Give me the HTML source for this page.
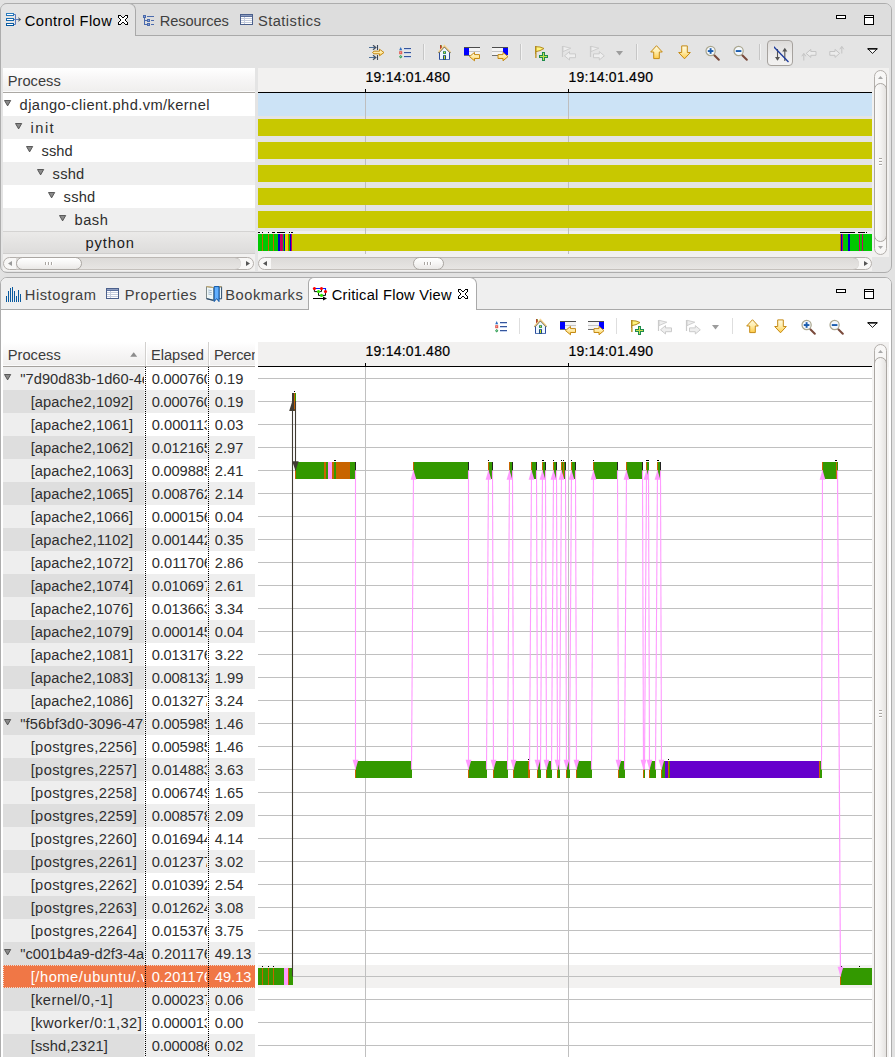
<!DOCTYPE html>
<html><head><meta charset="utf-8"><title>Trace Compass</title>
<style>
html,body{margin:0;padding:0}
body{width:895px;height:1057px;background:#e2e2e2;position:relative;overflow:hidden;font-family:"Liberation Sans",sans-serif;}
div,span,svg{position:absolute;box-sizing:border-box}
span{white-space:pre}
</style></head><body>
<div id="root" style="left:0;top:0;width:895px;height:1057px;overflow:hidden;background:#e2e2e2">
<div style="left:0;top:3px;width:892px;height:270px;border:1px solid #adadad;border-radius:7px;background:#e4e4e4"></div><div style="left:1px;top:4px;width:890px;height:32px;background:#dddddd;border-bottom:1px solid #a9a9a9;border-radius:6px 6px 0 0"></div><div style="left:1px;top:3px;width:135px;height:33px;background:#e4e4e4;border-top:1px solid #adadad;border-right:1px solid #a9a9a9;border-radius:6px 7px 0 0"></div><span style="left:24.80px;top:12.42px;font-size:14.67px;line-height:19px;color:#000;letter-spacing:0.430px;">Control Flow</span><span style="left:159.80px;top:11.92px;font-size:14.67px;line-height:19px;color:#404040;letter-spacing:-0.133px;">Resources</span><span style="left:257.90px;top:11.92px;font-size:14.67px;line-height:19px;color:#404040;letter-spacing:0.473px;">Statistics</span><div style="left:3px;top:68px;width:252px;height:24px;background:linear-gradient(#ffffff,#f7f6f6 45%,#efeeed)"></div><div style="left:3px;top:91px;width:252px;height:1px;background:#fbfbfb;"></div><div style="left:3px;top:92px;width:252px;height:1px;background:#aba8a4;"></div><span style="left:7.70px;top:71.82px;font-size:14.67px;line-height:19px;color:#3c3c3c;letter-spacing:0.024px;">Process</span><div style="left:3px;top:93px;width:252px;height:23px;background:#ffffff;"></div><svg style="left:4px;top:100px" width="8" height="7" viewBox="0 0 8 7"><path d="M0.5 0.5 L6.7 0.5 L3.6 5.9 Z" fill="#8a8a8a" stroke="#4e4e4e" stroke-width="0.9" stroke-linejoin="round"/></svg><span style="left:19.60px;top:96.42px;font-size:14.67px;line-height:19px;color:#2e2e2e;letter-spacing:0.410px;">django-client.phd.vm/kernel</span><div style="left:3px;top:116px;width:252px;height:23px;background:#efefef;"></div><svg style="left:15px;top:123px" width="8" height="7" viewBox="0 0 8 7"><path d="M0.5 0.5 L6.7 0.5 L3.6 5.9 Z" fill="#8a8a8a" stroke="#4e4e4e" stroke-width="0.9" stroke-linejoin="round"/></svg><span style="left:30.60px;top:119.42px;font-size:14.67px;line-height:19px;color:#2e2e2e;letter-spacing:1.450px;">init</span><div style="left:3px;top:139px;width:252px;height:23px;background:#ffffff;"></div><svg style="left:26px;top:146px" width="8" height="7" viewBox="0 0 8 7"><path d="M0.5 0.5 L6.7 0.5 L3.6 5.9 Z" fill="#8a8a8a" stroke="#4e4e4e" stroke-width="0.9" stroke-linejoin="round"/></svg><span style="left:41.60px;top:142.42px;font-size:14.67px;line-height:19px;color:#2e2e2e;letter-spacing:0.010px;">sshd</span><div style="left:3px;top:162px;width:252px;height:23px;background:#efefef;"></div><svg style="left:37px;top:169px" width="8" height="7" viewBox="0 0 8 7"><path d="M0.5 0.5 L6.7 0.5 L3.6 5.9 Z" fill="#8a8a8a" stroke="#4e4e4e" stroke-width="0.9" stroke-linejoin="round"/></svg><span style="left:52.60px;top:165.42px;font-size:14.67px;line-height:19px;color:#2e2e2e;letter-spacing:0.210px;">sshd</span><div style="left:3px;top:185px;width:252px;height:23px;background:#ffffff;"></div><svg style="left:48px;top:192px" width="8" height="7" viewBox="0 0 8 7"><path d="M0.5 0.5 L6.7 0.5 L3.6 5.9 Z" fill="#8a8a8a" stroke="#4e4e4e" stroke-width="0.9" stroke-linejoin="round"/></svg><span style="left:63.60px;top:188.42px;font-size:14.67px;line-height:19px;color:#2e2e2e;letter-spacing:0.210px;">sshd</span><div style="left:3px;top:208px;width:252px;height:23px;background:#efefef;"></div><svg style="left:59px;top:215px" width="8" height="7" viewBox="0 0 8 7"><path d="M0.5 0.5 L6.7 0.5 L3.6 5.9 Z" fill="#8a8a8a" stroke="#4e4e4e" stroke-width="0.9" stroke-linejoin="round"/></svg><span style="left:74.60px;top:211.42px;font-size:14.67px;line-height:19px;color:#2e2e2e;letter-spacing:0.468px;">bash</span><div style="left:3px;top:231px;width:252px;height:23px;background:linear-gradient(#ebeae9,#dddcdb);border-top:1px solid #d4d3d2;border-bottom:1px solid #cfcecd"></div><span style="left:85.60px;top:234.42px;font-size:14.67px;line-height:19px;color:#1c1c1c;letter-spacing:0.837px;">python</span><div style="left:258px;top:68px;width:631px;height:25px;background:#f2f1f0;"></div><div style="left:258px;top:92px;width:614px;height:1px;background:#000;"></div><div style="left:365px;top:89px;width:1px;height:3px;background:#000;"></div><span style="left:365.40px;top:67.55px;font-size:14px;line-height:18px;color:#000;letter-spacing:0.259px;-webkit-text-stroke:0.2px #000;">19:14:01.480</span><div style="left:568px;top:89px;width:1px;height:3px;background:#000;"></div><span style="left:568.40px;top:67.55px;font-size:14px;line-height:18px;color:#000;letter-spacing:0.259px;-webkit-text-stroke:0.2px #000;">19:14:01.490</span><div style="left:258px;top:93px;width:614px;height:23px;background:#cce3f6;"></div><div style="left:258px;top:231px;width:614px;height:23px;background:#f0f0f0;"></div><div style="left:365px;top:93px;width:1px;height:161px;background:#bebebe;"></div><div style="left:568px;top:93px;width:1px;height:161px;background:#bebebe;"></div><div style="left:258px;top:119px;width:614px;height:17px;background:#c8c800;"></div><div style="left:258px;top:142px;width:614px;height:17px;background:#c8c800;"></div><div style="left:258px;top:165px;width:614px;height:17px;background:#c8c800;"></div><div style="left:258px;top:188px;width:614px;height:17px;background:#c8c800;"></div><div style="left:258px;top:211px;width:614px;height:17px;background:#c8c800;"></div><div style="left:258px;top:234px;width:4px;height:17px;background:#00c800;"></div><div style="left:262px;top:234px;width:1px;height:17px;background:#c86400;"></div><div style="left:263px;top:234px;width:5px;height:17px;background:#00c800;"></div><div style="left:268px;top:234px;width:1px;height:17px;background:#c86400;"></div><div style="left:269px;top:234px;width:4px;height:17px;background:#00c800;"></div><div style="left:273px;top:234px;width:1px;height:17px;background:#c86400;"></div><div style="left:274px;top:234px;width:4px;height:17px;background:#00c800;"></div><div style="left:278px;top:234px;width:2px;height:17px;background:#0000c8;"></div><div style="left:280px;top:234px;width:3px;height:17px;background:#c80064;"></div><div style="left:283px;top:234px;width:1px;height:17px;background:#00c800;"></div><div style="left:284px;top:234px;width:1px;height:17px;background:#0000c8;"></div><div style="left:285px;top:234px;width:3px;height:17px;background:#dcdc00;"></div><div style="left:288px;top:234px;width:1px;height:17px;background:#c86400;"></div><div style="left:289px;top:234px;width:1px;height:17px;background:#00c800;"></div><div style="left:290px;top:234px;width:1px;height:17px;background:#0000c8;"></div><div style="left:291px;top:234px;width:1px;height:17px;background:#c80064;"></div><div style="left:292px;top:234px;width:548px;height:17px;background:#c8c800;"></div><div style="left:840px;top:234px;width:1px;height:17px;background:#c86400;"></div><div style="left:841px;top:234px;width:1px;height:17px;background:#0000c8;"></div><div style="left:842px;top:234px;width:1px;height:17px;background:#c80064;"></div><div style="left:843px;top:234px;width:5px;height:17px;background:#00c800;"></div><div style="left:848px;top:234px;width:2px;height:17px;background:#0000c8;"></div><div style="left:850px;top:234px;width:9px;height:17px;background:#00c800;"></div><div style="left:859px;top:234px;width:1px;height:17px;background:#c80064;"></div><div style="left:860px;top:234px;width:2px;height:17px;background:#00c800;"></div><div style="left:862px;top:234px;width:1px;height:17px;background:#c80064;"></div><div style="left:863px;top:234px;width:9px;height:17px;background:#00c800;"></div><div style="left:258px;top:232px;width:2px;height:1px;background:#000;"></div><div style="left:262px;top:232px;width:1px;height:1px;background:#000;"></div><div style="left:268px;top:232px;width:1px;height:1px;background:#000;"></div><div style="left:272px;top:232px;width:3px;height:1px;background:#000;"></div><div style="left:277px;top:232px;width:8px;height:1px;background:#000;"></div><div style="left:289px;top:232px;width:1px;height:1px;background:#000;"></div><div style="left:291px;top:232px;width:2px;height:1px;background:#000;"></div><div style="left:840px;top:232px;width:15px;height:1px;background:#000;"></div><div style="left:858px;top:232px;width:7px;height:1px;background:#000;"></div><div style="left:866px;top:232px;width:1px;height:1px;background:#000;"></div><div style="left:0;top:277px;width:892px;height:800px;border:1px solid #adadad;border-radius:7px;background:#ffffff"></div><div style="left:1px;top:278px;width:890px;height:32px;background:#efefef;border-bottom:1px solid #a9a9a9;border-radius:6px 6px 0 0"></div><div style="left:308px;top:277px;width:169px;height:33px;background:#ffffff;border:1px solid #a9a9a9;border-bottom:none;border-top-color:#adadad;border-radius:6px 7px 0 0"></div><span style="left:24.80px;top:286.02px;font-size:14.67px;line-height:19px;color:#404040;letter-spacing:0.550px;">Histogram</span><span style="left:124.80px;top:286.02px;font-size:14.67px;line-height:19px;color:#404040;letter-spacing:0.543px;">Properties</span><span style="left:225.30px;top:286.02px;font-size:14.67px;line-height:19px;color:#404040;letter-spacing:0.523px;">Bookmarks</span><span style="left:331.70px;top:286.02px;font-size:14.67px;line-height:19px;color:#000;letter-spacing:0.266px;">Critical Flow View</span><div style="left:3px;top:342px;width:252px;height:24px;background:linear-gradient(#ffffff,#f7f6f6 45%,#efeeed)"></div><div style="left:3px;top:365px;width:252px;height:1px;background:#fbfbfb;"></div><div style="left:3px;top:366px;width:252px;height:1px;background:#a5a29e;"></div><div style="left:145px;top:342px;width:1px;height:24px;background:#d2d0ce;"></div><div style="left:146px;top:342px;width:1px;height:24px;background:#ffffff;"></div><div style="left:208px;top:342px;width:1px;height:24px;background:#d2d0ce;"></div><div style="left:209px;top:342px;width:1px;height:24px;background:#ffffff;"></div><span style="left:7.70px;top:345.82px;font-size:14.67px;line-height:19px;color:#3c3c3c;letter-spacing:0.024px;">Process</span><span style="left:150.90px;top:345.82px;font-size:14.67px;line-height:19px;color:#3c3c3c;letter-spacing:-0.011px;">Elapsed</span><span style="left:214.00px;top:345.82px;font-size:14.67px;line-height:19px;color:#3c3c3c;letter-spacing:-0.203px;width:41px;overflow:hidden;">Percent</span><svg style="left:130px;top:352px" width="8" height="5" viewBox="0 0 8 5"><path d="M0.2 4.8 L3.7 0.2 L7.2 4.8 Z" fill="#8c8c8c"/></svg><div style="left:3px;top:367px;width:141px;height:23px;background:#eeeeee;"></div><svg style="left:4px;top:374px" width="8" height="7" viewBox="0 0 8 7"><path d="M0.5 0.5 L6.7 0.5 L3.6 5.9 Z" fill="#8a8a8a" stroke="#4e4e4e" stroke-width="0.9" stroke-linejoin="round"/></svg><div style="left:3px;top:367px;width:141px;height:23px;overflow:hidden"><span style="left:17.30px;top:3.42px;font-size:14.67px;line-height:19px;color:#2e2e2e;letter-spacing:0.037px;">&quot;7d90d83b-1d60-4e2</span></div><div style="left:146px;top:367px;width:61px;height:23px;overflow:hidden"><span style="left:5.70px;top:3.42px;font-size:14.67px;line-height:19px;color:#2e2e2e;letter-spacing:-0.147px;">0.000760</span></div><span style="left:214.80px;top:370.42px;font-size:14.67px;line-height:19px;color:#2e2e2e;">0.19</span><div style="left:3px;top:390px;width:141px;height:23px;background:#dedede;"></div><div style="left:144px;top:390px;width:111px;height:23px;background:#eeeeee;"></div><div style="left:3px;top:390px;width:141px;height:23px;overflow:hidden"><span style="left:27.70px;top:3.42px;font-size:14.67px;line-height:19px;color:#2e2e2e;letter-spacing:0.095px;">[apache2,1092]</span></div><div style="left:146px;top:390px;width:61px;height:23px;overflow:hidden"><span style="left:5.70px;top:3.42px;font-size:14.67px;line-height:19px;color:#2e2e2e;letter-spacing:-0.147px;">0.000760</span></div><span style="left:214.80px;top:393.42px;font-size:14.67px;line-height:19px;color:#2e2e2e;">0.19</span><div style="left:3px;top:413px;width:141px;height:23px;background:#eeeeee;"></div><div style="left:3px;top:413px;width:141px;height:23px;overflow:hidden"><span style="left:27.70px;top:3.42px;font-size:14.67px;line-height:19px;color:#2e2e2e;letter-spacing:0.095px;">[apache2,1061]</span></div><div style="left:146px;top:413px;width:61px;height:23px;overflow:hidden"><span style="left:5.70px;top:3.42px;font-size:14.67px;line-height:19px;color:#2e2e2e;letter-spacing:0.035px;">0.000113</span></div><span style="left:214.80px;top:416.42px;font-size:14.67px;line-height:19px;color:#2e2e2e;">0.03</span><div style="left:3px;top:436px;width:141px;height:23px;background:#dedede;"></div><div style="left:144px;top:436px;width:111px;height:23px;background:#eeeeee;"></div><div style="left:3px;top:436px;width:141px;height:23px;overflow:hidden"><span style="left:27.70px;top:3.42px;font-size:14.67px;line-height:19px;color:#2e2e2e;letter-spacing:0.095px;">[apache2,1062]</span></div><div style="left:146px;top:436px;width:61px;height:23px;overflow:hidden"><span style="left:5.70px;top:3.42px;font-size:14.67px;line-height:19px;color:#2e2e2e;letter-spacing:-0.147px;">0.012165</span></div><span style="left:214.80px;top:439.42px;font-size:14.67px;line-height:19px;color:#2e2e2e;">2.97</span><div style="left:3px;top:459px;width:141px;height:23px;background:#eeeeee;"></div><div style="left:3px;top:459px;width:141px;height:23px;overflow:hidden"><span style="left:27.70px;top:3.42px;font-size:14.67px;line-height:19px;color:#2e2e2e;letter-spacing:0.095px;">[apache2,1063]</span></div><div style="left:146px;top:459px;width:61px;height:23px;overflow:hidden"><span style="left:5.70px;top:3.42px;font-size:14.67px;line-height:19px;color:#2e2e2e;letter-spacing:-0.147px;">0.009885</span></div><span style="left:214.80px;top:462.42px;font-size:14.67px;line-height:19px;color:#2e2e2e;">2.41</span><div style="left:3px;top:482px;width:141px;height:23px;background:#dedede;"></div><div style="left:144px;top:482px;width:111px;height:23px;background:#eeeeee;"></div><div style="left:3px;top:482px;width:141px;height:23px;overflow:hidden"><span style="left:27.70px;top:3.42px;font-size:14.67px;line-height:19px;color:#2e2e2e;letter-spacing:0.095px;">[apache2,1065]</span></div><div style="left:146px;top:482px;width:61px;height:23px;overflow:hidden"><span style="left:5.70px;top:3.42px;font-size:14.67px;line-height:19px;color:#2e2e2e;letter-spacing:-0.147px;">0.008762</span></div><span style="left:214.80px;top:485.42px;font-size:14.67px;line-height:19px;color:#2e2e2e;">2.14</span><div style="left:3px;top:505px;width:141px;height:23px;background:#eeeeee;"></div><div style="left:3px;top:505px;width:141px;height:23px;overflow:hidden"><span style="left:27.70px;top:3.42px;font-size:14.67px;line-height:19px;color:#2e2e2e;letter-spacing:0.095px;">[apache2,1066]</span></div><div style="left:146px;top:505px;width:61px;height:23px;overflow:hidden"><span style="left:5.70px;top:3.42px;font-size:14.67px;line-height:19px;color:#2e2e2e;letter-spacing:-0.147px;">0.000156</span></div><span style="left:214.80px;top:508.42px;font-size:14.67px;line-height:19px;color:#2e2e2e;">0.04</span><div style="left:3px;top:528px;width:141px;height:23px;background:#dedede;"></div><div style="left:144px;top:528px;width:111px;height:23px;background:#eeeeee;"></div><div style="left:3px;top:528px;width:141px;height:23px;overflow:hidden"><span style="left:27.70px;top:3.42px;font-size:14.67px;line-height:19px;color:#2e2e2e;letter-spacing:0.179px;">[apache2,1102]</span></div><div style="left:146px;top:528px;width:61px;height:23px;overflow:hidden"><span style="left:5.70px;top:3.42px;font-size:14.67px;line-height:19px;color:#2e2e2e;letter-spacing:-0.147px;">0.001442</span></div><span style="left:214.80px;top:531.42px;font-size:14.67px;line-height:19px;color:#2e2e2e;">0.35</span><div style="left:3px;top:551px;width:141px;height:23px;background:#eeeeee;"></div><div style="left:3px;top:551px;width:141px;height:23px;overflow:hidden"><span style="left:27.70px;top:3.42px;font-size:14.67px;line-height:19px;color:#2e2e2e;letter-spacing:0.095px;">[apache2,1072]</span></div><div style="left:146px;top:551px;width:61px;height:23px;overflow:hidden"><span style="left:5.70px;top:3.42px;font-size:14.67px;line-height:19px;color:#2e2e2e;letter-spacing:0.035px;">0.011706</span></div><span style="left:214.80px;top:554.42px;font-size:14.67px;line-height:19px;color:#2e2e2e;">2.86</span><div style="left:3px;top:574px;width:141px;height:23px;background:#dedede;"></div><div style="left:144px;top:574px;width:111px;height:23px;background:#eeeeee;"></div><div style="left:3px;top:574px;width:141px;height:23px;overflow:hidden"><span style="left:27.70px;top:3.42px;font-size:14.67px;line-height:19px;color:#2e2e2e;letter-spacing:0.095px;">[apache2,1074]</span></div><div style="left:146px;top:574px;width:61px;height:23px;overflow:hidden"><span style="left:5.70px;top:3.42px;font-size:14.67px;line-height:19px;color:#2e2e2e;letter-spacing:-0.147px;">0.010697</span></div><span style="left:214.80px;top:577.42px;font-size:14.67px;line-height:19px;color:#2e2e2e;">2.61</span><div style="left:3px;top:597px;width:141px;height:23px;background:#eeeeee;"></div><div style="left:3px;top:597px;width:141px;height:23px;overflow:hidden"><span style="left:27.70px;top:3.42px;font-size:14.67px;line-height:19px;color:#2e2e2e;letter-spacing:0.095px;">[apache2,1076]</span></div><div style="left:146px;top:597px;width:61px;height:23px;overflow:hidden"><span style="left:5.70px;top:3.42px;font-size:14.67px;line-height:19px;color:#2e2e2e;letter-spacing:-0.147px;">0.013663</span></div><span style="left:214.80px;top:600.42px;font-size:14.67px;line-height:19px;color:#2e2e2e;">3.34</span><div style="left:3px;top:620px;width:141px;height:23px;background:#dedede;"></div><div style="left:144px;top:620px;width:111px;height:23px;background:#eeeeee;"></div><div style="left:3px;top:620px;width:141px;height:23px;overflow:hidden"><span style="left:27.70px;top:3.42px;font-size:14.67px;line-height:19px;color:#2e2e2e;letter-spacing:0.095px;">[apache2,1079]</span></div><div style="left:146px;top:620px;width:61px;height:23px;overflow:hidden"><span style="left:5.70px;top:3.42px;font-size:14.67px;line-height:19px;color:#2e2e2e;letter-spacing:-0.147px;">0.000145</span></div><span style="left:214.80px;top:623.42px;font-size:14.67px;line-height:19px;color:#2e2e2e;">0.04</span><div style="left:3px;top:643px;width:141px;height:23px;background:#eeeeee;"></div><div style="left:3px;top:643px;width:141px;height:23px;overflow:hidden"><span style="left:27.70px;top:3.42px;font-size:14.67px;line-height:19px;color:#2e2e2e;letter-spacing:0.095px;">[apache2,1081]</span></div><div style="left:146px;top:643px;width:61px;height:23px;overflow:hidden"><span style="left:5.70px;top:3.42px;font-size:14.67px;line-height:19px;color:#2e2e2e;letter-spacing:-0.147px;">0.013176</span></div><span style="left:214.80px;top:646.42px;font-size:14.67px;line-height:19px;color:#2e2e2e;">3.22</span><div style="left:3px;top:666px;width:141px;height:23px;background:#dedede;"></div><div style="left:144px;top:666px;width:111px;height:23px;background:#eeeeee;"></div><div style="left:3px;top:666px;width:141px;height:23px;overflow:hidden"><span style="left:27.70px;top:3.42px;font-size:14.67px;line-height:19px;color:#2e2e2e;letter-spacing:0.095px;">[apache2,1083]</span></div><div style="left:146px;top:666px;width:61px;height:23px;overflow:hidden"><span style="left:5.70px;top:3.42px;font-size:14.67px;line-height:19px;color:#2e2e2e;letter-spacing:-0.147px;">0.008132</span></div><span style="left:214.80px;top:669.42px;font-size:14.67px;line-height:19px;color:#2e2e2e;">1.99</span><div style="left:3px;top:689px;width:141px;height:23px;background:#eeeeee;"></div><div style="left:3px;top:689px;width:141px;height:23px;overflow:hidden"><span style="left:27.70px;top:3.42px;font-size:14.67px;line-height:19px;color:#2e2e2e;letter-spacing:0.095px;">[apache2,1086]</span></div><div style="left:146px;top:689px;width:61px;height:23px;overflow:hidden"><span style="left:5.70px;top:3.42px;font-size:14.67px;line-height:19px;color:#2e2e2e;letter-spacing:-0.147px;">0.013277</span></div><span style="left:214.80px;top:692.42px;font-size:14.67px;line-height:19px;color:#2e2e2e;">3.24</span><div style="left:3px;top:712px;width:141px;height:23px;background:#dedede;"></div><div style="left:144px;top:712px;width:111px;height:23px;background:#eeeeee;"></div><svg style="left:4px;top:719px" width="8" height="7" viewBox="0 0 8 7"><path d="M0.5 0.5 L6.7 0.5 L3.6 5.9 Z" fill="#8a8a8a" stroke="#4e4e4e" stroke-width="0.9" stroke-linejoin="round"/></svg><div style="left:3px;top:712px;width:141px;height:23px;overflow:hidden"><span style="left:17.30px;top:3.42px;font-size:14.67px;line-height:19px;color:#2e2e2e;letter-spacing:0.124px;">&quot;f56bf3d0-3096-479</span></div><div style="left:146px;top:712px;width:61px;height:23px;overflow:hidden"><span style="left:5.70px;top:3.42px;font-size:14.67px;line-height:19px;color:#2e2e2e;letter-spacing:-0.147px;">0.005985</span></div><span style="left:214.80px;top:715.42px;font-size:14.67px;line-height:19px;color:#2e2e2e;">1.46</span><div style="left:3px;top:735px;width:141px;height:23px;background:#eeeeee;"></div><div style="left:3px;top:735px;width:141px;height:23px;overflow:hidden"><span style="left:27.70px;top:3.42px;font-size:14.67px;line-height:19px;color:#2e2e2e;letter-spacing:0.361px;">[postgres,2256]</span></div><div style="left:146px;top:735px;width:61px;height:23px;overflow:hidden"><span style="left:5.70px;top:3.42px;font-size:14.67px;line-height:19px;color:#2e2e2e;letter-spacing:-0.147px;">0.005985</span></div><span style="left:214.80px;top:738.42px;font-size:14.67px;line-height:19px;color:#2e2e2e;">1.46</span><div style="left:3px;top:758px;width:141px;height:23px;background:#dedede;"></div><div style="left:144px;top:758px;width:111px;height:23px;background:#eeeeee;"></div><div style="left:3px;top:758px;width:141px;height:23px;overflow:hidden"><span style="left:27.70px;top:3.42px;font-size:14.67px;line-height:19px;color:#2e2e2e;letter-spacing:0.361px;">[postgres,2257]</span></div><div style="left:146px;top:758px;width:61px;height:23px;overflow:hidden"><span style="left:5.70px;top:3.42px;font-size:14.67px;line-height:19px;color:#2e2e2e;letter-spacing:-0.147px;">0.014883</span></div><span style="left:214.80px;top:761.42px;font-size:14.67px;line-height:19px;color:#2e2e2e;">3.63</span><div style="left:3px;top:781px;width:141px;height:23px;background:#eeeeee;"></div><div style="left:3px;top:781px;width:141px;height:23px;overflow:hidden"><span style="left:27.70px;top:3.42px;font-size:14.67px;line-height:19px;color:#2e2e2e;letter-spacing:0.361px;">[postgres,2258]</span></div><div style="left:146px;top:781px;width:61px;height:23px;overflow:hidden"><span style="left:5.70px;top:3.42px;font-size:14.67px;line-height:19px;color:#2e2e2e;letter-spacing:-0.147px;">0.006749</span></div><span style="left:214.80px;top:784.42px;font-size:14.67px;line-height:19px;color:#2e2e2e;">1.65</span><div style="left:3px;top:804px;width:141px;height:23px;background:#dedede;"></div><div style="left:144px;top:804px;width:111px;height:23px;background:#eeeeee;"></div><div style="left:3px;top:804px;width:141px;height:23px;overflow:hidden"><span style="left:27.70px;top:3.42px;font-size:14.67px;line-height:19px;color:#2e2e2e;letter-spacing:0.361px;">[postgres,2259]</span></div><div style="left:146px;top:804px;width:61px;height:23px;overflow:hidden"><span style="left:5.70px;top:3.42px;font-size:14.67px;line-height:19px;color:#2e2e2e;letter-spacing:-0.147px;">0.008578</span></div><span style="left:214.80px;top:807.42px;font-size:14.67px;line-height:19px;color:#2e2e2e;">2.09</span><div style="left:3px;top:827px;width:141px;height:23px;background:#eeeeee;"></div><div style="left:3px;top:827px;width:141px;height:23px;overflow:hidden"><span style="left:27.70px;top:3.42px;font-size:14.67px;line-height:19px;color:#2e2e2e;letter-spacing:0.361px;">[postgres,2260]</span></div><div style="left:146px;top:827px;width:61px;height:23px;overflow:hidden"><span style="left:5.70px;top:3.42px;font-size:14.67px;line-height:19px;color:#2e2e2e;letter-spacing:-0.147px;">0.016944</span></div><span style="left:214.80px;top:830.42px;font-size:14.67px;line-height:19px;color:#2e2e2e;">4.14</span><div style="left:3px;top:850px;width:141px;height:23px;background:#dedede;"></div><div style="left:144px;top:850px;width:111px;height:23px;background:#eeeeee;"></div><div style="left:3px;top:850px;width:141px;height:23px;overflow:hidden"><span style="left:27.70px;top:3.42px;font-size:14.67px;line-height:19px;color:#2e2e2e;letter-spacing:0.361px;">[postgres,2261]</span></div><div style="left:146px;top:850px;width:61px;height:23px;overflow:hidden"><span style="left:5.70px;top:3.42px;font-size:14.67px;line-height:19px;color:#2e2e2e;letter-spacing:-0.147px;">0.012377</span></div><span style="left:214.80px;top:853.42px;font-size:14.67px;line-height:19px;color:#2e2e2e;">3.02</span><div style="left:3px;top:873px;width:141px;height:23px;background:#eeeeee;"></div><div style="left:3px;top:873px;width:141px;height:23px;overflow:hidden"><span style="left:27.70px;top:3.42px;font-size:14.67px;line-height:19px;color:#2e2e2e;letter-spacing:0.361px;">[postgres,2262]</span></div><div style="left:146px;top:873px;width:61px;height:23px;overflow:hidden"><span style="left:5.70px;top:3.42px;font-size:14.67px;line-height:19px;color:#2e2e2e;letter-spacing:-0.147px;">0.010392</span></div><span style="left:214.80px;top:876.42px;font-size:14.67px;line-height:19px;color:#2e2e2e;">2.54</span><div style="left:3px;top:896px;width:141px;height:23px;background:#dedede;"></div><div style="left:144px;top:896px;width:111px;height:23px;background:#eeeeee;"></div><div style="left:3px;top:896px;width:141px;height:23px;overflow:hidden"><span style="left:27.70px;top:3.42px;font-size:14.67px;line-height:19px;color:#2e2e2e;letter-spacing:0.361px;">[postgres,2263]</span></div><div style="left:146px;top:896px;width:61px;height:23px;overflow:hidden"><span style="left:5.70px;top:3.42px;font-size:14.67px;line-height:19px;color:#2e2e2e;letter-spacing:-0.147px;">0.012624</span></div><span style="left:214.80px;top:899.42px;font-size:14.67px;line-height:19px;color:#2e2e2e;">3.08</span><div style="left:3px;top:919px;width:141px;height:23px;background:#eeeeee;"></div><div style="left:3px;top:919px;width:141px;height:23px;overflow:hidden"><span style="left:27.70px;top:3.42px;font-size:14.67px;line-height:19px;color:#2e2e2e;letter-spacing:0.361px;">[postgres,2264]</span></div><div style="left:146px;top:919px;width:61px;height:23px;overflow:hidden"><span style="left:5.70px;top:3.42px;font-size:14.67px;line-height:19px;color:#2e2e2e;letter-spacing:-0.147px;">0.015376</span></div><span style="left:214.80px;top:922.42px;font-size:14.67px;line-height:19px;color:#2e2e2e;">3.75</span><div style="left:3px;top:942px;width:141px;height:23px;background:#dedede;"></div><div style="left:144px;top:942px;width:111px;height:23px;background:#eeeeee;"></div><svg style="left:4px;top:949px" width="8" height="7" viewBox="0 0 8 7"><path d="M0.5 0.5 L6.7 0.5 L3.6 5.9 Z" fill="#8a8a8a" stroke="#4e4e4e" stroke-width="0.9" stroke-linejoin="round"/></svg><div style="left:3px;top:942px;width:141px;height:23px;overflow:hidden"><span style="left:17.30px;top:3.42px;font-size:14.67px;line-height:19px;color:#2e2e2e;letter-spacing:-0.024px;">&quot;c001b4a9-d2f3-4a5</span></div><div style="left:146px;top:942px;width:61px;height:23px;overflow:hidden"><span style="left:5.70px;top:3.42px;font-size:14.67px;line-height:19px;color:#2e2e2e;letter-spacing:0.035px;">0.201176</span></div><span style="left:214.80px;top:945.42px;font-size:14.67px;line-height:19px;color:#2e2e2e;">49.13</span><div style="left:3px;top:965px;width:252px;height:23px;background:#f07746;"></div><div style="left:3px;top:965px;width:252px;height:1px;background:repeating-linear-gradient(90deg,#ecd9d0 0,#ecd9d0 1px,transparent 1px,transparent 2px)"></div><div style="left:3px;top:987px;width:252px;height:1px;background:repeating-linear-gradient(90deg,#ecd9d0 0,#ecd9d0 1px,transparent 1px,transparent 2px)"></div><div style="left:3px;top:965px;width:1px;height:23px;background:repeating-linear-gradient(#ecd9d0 0,#ecd9d0 1px,transparent 1px,transparent 2px)"></div><div style="left:3px;top:965px;width:141px;height:23px;overflow:hidden"><span style="left:27.70px;top:3.42px;font-size:14.67px;line-height:19px;color:#ffffff;letter-spacing:0.553px;">[/home/ubuntu/.v</span></div><div style="left:146px;top:965px;width:61px;height:23px;overflow:hidden"><span style="left:5.70px;top:3.42px;font-size:14.67px;line-height:19px;color:#ffffff;letter-spacing:0.035px;">0.201176</span></div><span style="left:214.80px;top:968.42px;font-size:14.67px;line-height:19px;color:#ffffff;">49.13</span><div style="left:3px;top:988px;width:141px;height:23px;background:#dedede;"></div><div style="left:144px;top:988px;width:111px;height:23px;background:#eeeeee;"></div><div style="left:3px;top:988px;width:141px;height:23px;overflow:hidden"><span style="left:27.70px;top:3.42px;font-size:14.67px;line-height:19px;color:#2e2e2e;letter-spacing:0.384px;">[kernel/0,-1]</span></div><div style="left:146px;top:988px;width:61px;height:23px;overflow:hidden"><span style="left:5.70px;top:3.42px;font-size:14.67px;line-height:19px;color:#2e2e2e;letter-spacing:-0.147px;">0.000237</span></div><span style="left:214.80px;top:991.42px;font-size:14.67px;line-height:19px;color:#2e2e2e;">0.06</span><div style="left:3px;top:1011px;width:141px;height:23px;background:#eeeeee;"></div><div style="left:3px;top:1011px;width:141px;height:23px;overflow:hidden"><span style="left:27.70px;top:3.42px;font-size:14.67px;line-height:19px;color:#2e2e2e;letter-spacing:0.455px;">[kworker/0:1,32]</span></div><div style="left:146px;top:1011px;width:61px;height:23px;overflow:hidden"><span style="left:5.70px;top:3.42px;font-size:14.67px;line-height:19px;color:#2e2e2e;letter-spacing:-0.147px;">0.000013</span></div><span style="left:214.80px;top:1014.42px;font-size:14.67px;line-height:19px;color:#2e2e2e;">0.00</span><div style="left:3px;top:1034px;width:141px;height:23px;background:#dedede;"></div><div style="left:144px;top:1034px;width:111px;height:23px;background:#eeeeee;"></div><div style="left:3px;top:1034px;width:141px;height:23px;overflow:hidden"><span style="left:27.70px;top:3.42px;font-size:14.67px;line-height:19px;color:#2e2e2e;letter-spacing:0.132px;">[sshd,2321]</span></div><div style="left:146px;top:1034px;width:61px;height:23px;overflow:hidden"><span style="left:5.70px;top:3.42px;font-size:14.67px;line-height:19px;color:#2e2e2e;letter-spacing:-0.147px;">0.000086</span></div><span style="left:214.80px;top:1037.42px;font-size:14.67px;line-height:19px;color:#2e2e2e;">0.02</span><div style="left:145px;top:367px;width:1px;height:700px;background:repeating-linear-gradient(#000 0,#000 1px,transparent 1px,transparent 2px)"></div><div style="left:208px;top:367px;width:1px;height:700px;background:repeating-linear-gradient(#000 0,#000 1px,transparent 1px,transparent 2px)"></div><div style="left:258px;top:342px;width:631px;height:25px;background:#f2f1f0;"></div><div style="left:258px;top:366px;width:614px;height:1px;background:#000;"></div><div style="left:365px;top:363px;width:1px;height:3px;background:#000;"></div><span style="left:365.40px;top:341.55px;font-size:14px;line-height:18px;color:#000;letter-spacing:0.259px;-webkit-text-stroke:0.2px #000;">19:14:01.480</span><div style="left:568px;top:363px;width:1px;height:3px;background:#000;"></div><span style="left:568.40px;top:341.55px;font-size:14px;line-height:18px;color:#000;letter-spacing:0.259px;-webkit-text-stroke:0.2px #000;">19:14:01.490</span><div style="left:258px;top:965px;width:614px;height:23px;background:#f2f1f0;"></div><div style="left:258px;top:378px;width:614px;height:1px;background:#c0c0c0;"></div><div style="left:258px;top:401px;width:614px;height:1px;background:#c0c0c0;"></div><div style="left:258px;top:424px;width:614px;height:1px;background:#c0c0c0;"></div><div style="left:258px;top:447px;width:614px;height:1px;background:#c0c0c0;"></div><div style="left:258px;top:470px;width:614px;height:1px;background:#c0c0c0;"></div><div style="left:258px;top:493px;width:614px;height:1px;background:#c0c0c0;"></div><div style="left:258px;top:516px;width:614px;height:1px;background:#c0c0c0;"></div><div style="left:258px;top:539px;width:614px;height:1px;background:#c0c0c0;"></div><div style="left:258px;top:562px;width:614px;height:1px;background:#c0c0c0;"></div><div style="left:258px;top:585px;width:614px;height:1px;background:#c0c0c0;"></div><div style="left:258px;top:608px;width:614px;height:1px;background:#c0c0c0;"></div><div style="left:258px;top:631px;width:614px;height:1px;background:#c0c0c0;"></div><div style="left:258px;top:654px;width:614px;height:1px;background:#c0c0c0;"></div><div style="left:258px;top:677px;width:614px;height:1px;background:#c0c0c0;"></div><div style="left:258px;top:700px;width:614px;height:1px;background:#c0c0c0;"></div><div style="left:258px;top:723px;width:614px;height:1px;background:#c0c0c0;"></div><div style="left:258px;top:746px;width:614px;height:1px;background:#c0c0c0;"></div><div style="left:258px;top:769px;width:614px;height:1px;background:#c0c0c0;"></div><div style="left:258px;top:792px;width:614px;height:1px;background:#c0c0c0;"></div><div style="left:258px;top:815px;width:614px;height:1px;background:#c0c0c0;"></div><div style="left:258px;top:838px;width:614px;height:1px;background:#c0c0c0;"></div><div style="left:258px;top:861px;width:614px;height:1px;background:#c0c0c0;"></div><div style="left:258px;top:884px;width:614px;height:1px;background:#c0c0c0;"></div><div style="left:258px;top:907px;width:614px;height:1px;background:#c0c0c0;"></div><div style="left:258px;top:930px;width:614px;height:1px;background:#c0c0c0;"></div><div style="left:258px;top:953px;width:614px;height:1px;background:#c0c0c0;"></div><div style="left:258px;top:976px;width:614px;height:1px;background:#c0c0c0;"></div><div style="left:258px;top:999px;width:614px;height:1px;background:#c0c0c0;"></div><div style="left:258px;top:1022px;width:614px;height:1px;background:#c0c0c0;"></div><div style="left:258px;top:1045px;width:614px;height:1px;background:#c0c0c0;"></div><div style="left:365px;top:367px;width:1px;height:700px;background:#c0c0c0;"></div><div style="left:568px;top:367px;width:1px;height:700px;background:#c0c0c0;"></div><div style="left:292px;top:393px;width:2px;height:18px;background:#403b33;"></div><div style="left:294px;top:393px;width:1px;height:16px;background:#c86400;"></div><div style="left:294px;top:409px;width:1px;height:2px;background:#6b4a20;"></div><div style="left:295px;top:393px;width:1px;height:8px;background:#339900;"></div><div style="left:294px;top:391px;width:1px;height:1px;background:#000;"></div><div style="left:295px;top:462px;width:29px;height:17px;background:#339900;"></div><div style="left:324px;top:462px;width:2px;height:17px;background:#c86400;"></div><div style="left:326px;top:462px;width:2px;height:17px;background:#339900;"></div><div style="left:328px;top:462px;width:4px;height:17px;background:#ff9bff;"></div><div style="left:332px;top:462px;width:2px;height:17px;background:#c86400;"></div><div style="left:334px;top:462px;width:2px;height:17px;background:#339900;"></div><div style="left:336px;top:462px;width:14px;height:17px;background:#c86400;"></div><div style="left:350px;top:462px;width:6px;height:17px;background:#339900;"></div><div style="left:295px;top:462px;width:1px;height:17px;background:#c86400;"></div><div style="left:413px;top:462px;width:1px;height:17px;background:#c86400;"></div><div style="left:414px;top:462px;width:55px;height:17px;background:#339900;"></div><div style="left:488px;top:462px;width:1px;height:17px;background:#c86400;"></div><div style="left:489px;top:462px;width:4px;height:17px;background:#339900;"></div><div style="left:509px;top:462px;width:1px;height:17px;background:#c86400;"></div><div style="left:510px;top:462px;width:3px;height:17px;background:#339900;"></div><div style="left:531px;top:462px;width:1px;height:17px;background:#c86400;"></div><div style="left:532px;top:462px;width:5px;height:17px;background:#339900;"></div><div style="left:542px;top:462px;width:1px;height:17px;background:#c86400;"></div><div style="left:543px;top:462px;width:3px;height:17px;background:#339900;"></div><div style="left:553px;top:462px;width:1px;height:17px;background:#c86400;"></div><div style="left:554px;top:462px;width:3px;height:17px;background:#339900;"></div><div style="left:561px;top:462px;width:1px;height:17px;background:#c86400;"></div><div style="left:562px;top:462px;width:4px;height:17px;background:#339900;"></div><div style="left:571px;top:462px;width:1px;height:17px;background:#c86400;"></div><div style="left:572px;top:462px;width:4px;height:17px;background:#339900;"></div><div style="left:593px;top:462px;width:1px;height:17px;background:#c86400;"></div><div style="left:594px;top:462px;width:24px;height:17px;background:#339900;"></div><div style="left:626px;top:462px;width:1px;height:17px;background:#c86400;"></div><div style="left:627px;top:462px;width:16px;height:17px;background:#339900;"></div><div style="left:646px;top:462px;width:1px;height:17px;background:#c86400;"></div><div style="left:647px;top:462px;width:2px;height:17px;background:#339900;"></div><div style="left:657px;top:462px;width:1px;height:17px;background:#c86400;"></div><div style="left:658px;top:462px;width:3px;height:17px;background:#339900;"></div><div style="left:822px;top:462px;width:1px;height:17px;background:#c86400;"></div><div style="left:823px;top:462px;width:15px;height:17px;background:#339900;"></div><div style="left:563px;top:462px;width:1px;height:17px;background:#c86400;"></div><div style="left:836px;top:462px;width:1px;height:17px;background:#c86400;"></div><div style="left:355px;top:462px;width:1px;height:8px;background:#222;"></div><div style="left:468px;top:462px;width:1px;height:8px;background:#222;"></div><div style="left:492px;top:462px;width:1px;height:8px;background:#222;"></div><div style="left:512px;top:462px;width:1px;height:8px;background:#222;"></div><div style="left:536px;top:462px;width:1px;height:8px;background:#222;"></div><div style="left:545px;top:462px;width:1px;height:8px;background:#222;"></div><div style="left:556px;top:462px;width:1px;height:8px;background:#222;"></div><div style="left:565px;top:462px;width:1px;height:8px;background:#222;"></div><div style="left:575px;top:462px;width:1px;height:8px;background:#222;"></div><div style="left:617px;top:462px;width:1px;height:8px;background:#222;"></div><div style="left:642px;top:462px;width:1px;height:8px;background:#222;"></div><div style="left:660px;top:462px;width:1px;height:8px;background:#222;"></div><div style="left:334px;top:460px;width:2px;height:1px;background:#000;"></div><div style="left:488px;top:460px;width:1px;height:1px;background:#000;"></div><div style="left:542px;top:460px;width:2px;height:1px;background:#000;"></div><div style="left:553px;top:460px;width:1px;height:1px;background:#000;"></div><div style="left:561px;top:460px;width:1px;height:1px;background:#000;"></div><div style="left:563px;top:460px;width:1px;height:1px;background:#000;"></div><div style="left:571px;top:460px;width:1px;height:1px;background:#000;"></div><div style="left:593px;top:460px;width:1px;height:1px;background:#000;"></div><div style="left:646px;top:460px;width:3px;height:1px;background:#000;"></div><div style="left:657px;top:460px;width:2px;height:1px;background:#000;"></div><div style="left:835px;top:460px;width:2px;height:1px;background:#000;"></div><div style="left:355px;top:761px;width:1px;height:17px;background:#c86400;"></div><div style="left:356px;top:761px;width:56px;height:17px;background:#339900;"></div><div style="left:468px;top:761px;width:1px;height:17px;background:#c86400;"></div><div style="left:469px;top:761px;width:18px;height:17px;background:#339900;"></div><div style="left:493px;top:761px;width:1px;height:17px;background:#c86400;"></div><div style="left:494px;top:761px;width:14px;height:17px;background:#339900;"></div><div style="left:513px;top:761px;width:1px;height:17px;background:#c86400;"></div><div style="left:514px;top:761px;width:16px;height:17px;background:#339900;"></div><div style="left:537px;top:761px;width:1px;height:17px;background:#c86400;"></div><div style="left:538px;top:761px;width:3px;height:17px;background:#339900;"></div><div style="left:546px;top:761px;width:1px;height:17px;background:#c86400;"></div><div style="left:547px;top:761px;width:5px;height:17px;background:#339900;"></div><div style="left:557px;top:761px;width:1px;height:17px;background:#c86400;"></div><div style="left:558px;top:761px;width:2px;height:17px;background:#339900;"></div><div style="left:566px;top:761px;width:1px;height:17px;background:#c86400;"></div><div style="left:567px;top:761px;width:3px;height:17px;background:#339900;"></div><div style="left:576px;top:761px;width:1px;height:17px;background:#c86400;"></div><div style="left:577px;top:761px;width:15px;height:17px;background:#339900;"></div><div style="left:618px;top:761px;width:1px;height:17px;background:#c86400;"></div><div style="left:619px;top:761px;width:6px;height:17px;background:#339900;"></div><div style="left:643px;top:761px;width:1px;height:17px;background:#c86400;"></div><div style="left:644px;top:761px;width:1px;height:17px;background:#339900;"></div><div style="left:649px;top:761px;width:1px;height:17px;background:#c86400;"></div><div style="left:650px;top:761px;width:6px;height:17px;background:#339900;"></div><div style="left:528px;top:761px;width:2px;height:17px;background:#c86400;"></div><div style="left:661px;top:761px;width:1px;height:17px;background:#c86400;"></div><div style="left:662px;top:761px;width:3px;height:17px;background:#339900;"></div><div style="left:665px;top:761px;width:3px;height:17px;background:#6600cc;"></div><div style="left:668px;top:761px;width:1px;height:17px;background:#c86400;"></div><div style="left:669px;top:761px;width:1px;height:17px;background:#339900;"></div><div style="left:670px;top:761px;width:149px;height:17px;background:#6600cc;"></div><div style="left:819px;top:761px;width:1px;height:17px;background:#c86400;"></div><div style="left:820px;top:761px;width:2px;height:17px;background:#339900;"></div><div style="left:528px;top:759px;width:1px;height:1px;background:#000;"></div><div style="left:668px;top:759px;width:1px;height:1px;background:#000;"></div><div style="left:258px;top:968px;width:35px;height:17px;background:#339900;"></div><div style="left:262px;top:968px;width:1px;height:17px;background:#c86400;"></div><div style="left:268px;top:968px;width:1px;height:17px;background:#c86400;"></div><div style="left:273px;top:968px;width:1px;height:17px;background:#c86400;"></div><div style="left:284px;top:968px;width:4px;height:17px;background:#ff9bff;"></div><div style="left:288px;top:968px;width:1px;height:17px;background:#c86400;"></div><div style="left:840px;top:968px;width:1px;height:17px;background:#c86400;"></div><div style="left:841px;top:968px;width:31px;height:17px;background:#339900;"></div><div style="left:262px;top:966px;width:1px;height:1px;background:#000;"></div><div style="left:268px;top:966px;width:1px;height:1px;background:#000;"></div><div style="left:273px;top:966px;width:1px;height:1px;background:#000;"></div><div style="left:841px;top:966px;width:1px;height:1px;background:#000;"></div><div style="left:859px;top:966px;width:1px;height:1px;background:#000;"></div><svg style="left:258px;top:367px" width="616" height="690" viewBox="258 367 616 690"><line x1="355.5" y1="470.5" x2="355.5" y2="769.5" stroke="#ff9bff" stroke-width="1.1"/><polygon points="352.6,759.7 358.4,759.7 355.5,769.5" fill="#ff9bff"/><line x1="468.5" y1="470.5" x2="468.5" y2="769.5" stroke="#ff9bff" stroke-width="1.1"/><polygon points="465.6,759.7 471.4,759.7 468.5,769.5" fill="#ff9bff"/><line x1="492.5" y1="470.5" x2="493.5" y2="769.5" stroke="#ff9bff" stroke-width="1.1"/><polygon points="490.6,759.7 496.4,759.7 493.5,769.5" fill="#ff9bff"/><line x1="512.5" y1="470.5" x2="513.5" y2="769.5" stroke="#ff9bff" stroke-width="1.1"/><polygon points="510.6,759.7 516.4,759.7 513.5,769.5" fill="#ff9bff"/><line x1="536.5" y1="470.5" x2="537.5" y2="769.5" stroke="#ff9bff" stroke-width="1.1"/><polygon points="534.6,759.7 540.4,759.7 537.5,769.5" fill="#ff9bff"/><line x1="545.5" y1="470.5" x2="546.5" y2="769.5" stroke="#ff9bff" stroke-width="1.1"/><polygon points="543.6,759.7 549.4,759.7 546.5,769.5" fill="#ff9bff"/><line x1="556.5" y1="470.5" x2="557.5" y2="769.5" stroke="#ff9bff" stroke-width="1.1"/><polygon points="554.6,759.7 560.4,759.7 557.5,769.5" fill="#ff9bff"/><line x1="565.5" y1="470.5" x2="566.5" y2="769.5" stroke="#ff9bff" stroke-width="1.1"/><polygon points="563.6,759.7 569.4,759.7 566.5,769.5" fill="#ff9bff"/><line x1="575.5" y1="470.5" x2="576.5" y2="769.5" stroke="#ff9bff" stroke-width="1.1"/><polygon points="573.6,759.7 579.4,759.7 576.5,769.5" fill="#ff9bff"/><line x1="617.5" y1="470.5" x2="618.5" y2="769.5" stroke="#ff9bff" stroke-width="1.1"/><polygon points="615.6,759.7 621.4,759.7 618.5,769.5" fill="#ff9bff"/><line x1="642.5" y1="470.5" x2="643.5" y2="769.5" stroke="#ff9bff" stroke-width="1.1"/><polygon points="640.6,759.7 646.4,759.7 643.5,769.5" fill="#ff9bff"/><line x1="648.5" y1="470.5" x2="649.5" y2="769.5" stroke="#ff9bff" stroke-width="1.1"/><polygon points="646.6,759.7 652.4,759.7 649.5,769.5" fill="#ff9bff"/><line x1="660.5" y1="470.5" x2="661.5" y2="769.5" stroke="#ff9bff" stroke-width="1.1"/><polygon points="658.6,759.7 664.4,759.7 661.5,769.5" fill="#ff9bff"/><line x1="411.5" y1="769.5" x2="413.5" y2="470.5" stroke="#ff9bff" stroke-width="1.1"/><polygon points="410.6,479.8 416.4,479.8 413.5,470.0" fill="#ff9bff"/><line x1="486.5" y1="769.5" x2="488.5" y2="470.5" stroke="#ff9bff" stroke-width="1.1"/><polygon points="485.6,479.8 491.4,479.8 488.5,470.0" fill="#ff9bff"/><line x1="507.5" y1="769.5" x2="509.5" y2="470.5" stroke="#ff9bff" stroke-width="1.1"/><polygon points="506.6,479.8 512.4,479.8 509.5,470.0" fill="#ff9bff"/><line x1="529.5" y1="769.5" x2="531.5" y2="470.5" stroke="#ff9bff" stroke-width="1.1"/><polygon points="528.6,479.8 534.4,479.8 531.5,470.0" fill="#ff9bff"/><line x1="540.5" y1="769.5" x2="542.5" y2="470.5" stroke="#ff9bff" stroke-width="1.1"/><polygon points="539.6,479.8 545.4,479.8 542.5,470.0" fill="#ff9bff"/><line x1="551.5" y1="769.5" x2="553.5" y2="470.5" stroke="#ff9bff" stroke-width="1.1"/><polygon points="550.6,479.8 556.4,479.8 553.5,470.0" fill="#ff9bff"/><line x1="559.5" y1="769.5" x2="561.5" y2="470.5" stroke="#ff9bff" stroke-width="1.1"/><polygon points="558.6,479.8 564.4,479.8 561.5,470.0" fill="#ff9bff"/><line x1="569.5" y1="769.5" x2="571.5" y2="470.5" stroke="#ff9bff" stroke-width="1.1"/><polygon points="568.6,479.8 574.4,479.8 571.5,470.0" fill="#ff9bff"/><line x1="591.5" y1="769.5" x2="593.5" y2="470.5" stroke="#ff9bff" stroke-width="1.1"/><polygon points="590.6,479.8 596.4,479.8 593.5,470.0" fill="#ff9bff"/><line x1="624.5" y1="769.5" x2="626.5" y2="470.5" stroke="#ff9bff" stroke-width="1.1"/><polygon points="623.6,479.8 629.4,479.8 626.5,470.0" fill="#ff9bff"/><line x1="644.5" y1="769.5" x2="646.5" y2="470.5" stroke="#ff9bff" stroke-width="1.1"/><polygon points="643.6,479.8 649.4,479.8 646.5,470.0" fill="#ff9bff"/><line x1="655.5" y1="769.5" x2="657.5" y2="470.5" stroke="#ff9bff" stroke-width="1.1"/><polygon points="654.6,479.8 660.4,479.8 657.5,470.0" fill="#ff9bff"/><line x1="821.5" y1="769.5" x2="822.5" y2="470.5" stroke="#ff9bff" stroke-width="1.1"/><polygon points="819.6,479.8 825.4,479.8 822.5,470.0" fill="#ff9bff"/><line x1="837.5" y1="470.5" x2="840.5" y2="976.5" stroke="#ff9bff" stroke-width="1.2"/><polygon points="837.6,966.7 843.4,966.7 840.5,976.5" fill="#ff9bff"/><line x1="292.5" y1="411" x2="292.5" y2="976.5" stroke="#403b33" stroke-width="1.1"/><polygon points="292,402 289.2,411 292,411" fill="#403b33"/><line x1="295.5" y1="401" x2="295.5" y2="470.5" stroke="#403b33" stroke-width="1.1"/><polygon points="292.2,461.3 298.7,461.3 295.5,470.8" fill="#403b33"/></svg><div style="left:3px;top:254px;width:252px;height:17px;background:#f2f1f0;"></div><div style="left:258px;top:254px;width:614px;height:17px;background:#f2f1f0;"></div><div style="left:872px;top:68px;width:17px;height:189px;background:#f2f1f0;"></div><div style="left:3px;top:257px;width:251px;height:13px;border:1px solid #b3afab;border-radius:7px;background:#f8f7f6"></div><div style="left:16px;top:257px;width:225px;height:13px;border-top:1px solid #bcb8b4;border-bottom:1px solid #c4c0bc;background:linear-gradient(#dcdad8,#e7e5e3);border-radius:0 7px 7px 0"></div><div style="left:16px;top:257px;width:66px;height:13px;border:1px solid #aaa6a2;border-radius:7px;background:linear-gradient(#ffffff,#f6f5f4 50%,#eae8e6)"></div><div style="left:45px;top:262px;width:1px;height:3px;background:#aaa6a2;"></div><div style="left:46px;top:262px;width:1px;height:3px;background:#ffffff;"></div><div style="left:48px;top:262px;width:1px;height:3px;background:#aaa6a2;"></div><div style="left:49px;top:262px;width:1px;height:3px;background:#ffffff;"></div><div style="left:51px;top:262px;width:1px;height:3px;background:#aaa6a2;"></div><div style="left:52px;top:262px;width:1px;height:3px;background:#ffffff;"></div><svg style="left:8px;top:261px" width="4" height="5" viewBox="0 0 4 5"><polygon points="4,0 4,5 0,2.5" fill="#9a9a9a"/></svg><svg style="left:246px;top:261px" width="4" height="5" viewBox="0 0 4 5"><polygon points="0,0 0,5 4,2.5" fill="#555"/></svg><div style="left:258px;top:257px;width:614px;height:13px;border:1px solid #b3afab;border-radius:7px;background:#f8f7f6"></div><div style="left:271px;top:257px;width:588px;height:13px;border-top:1px solid #bcb8b4;border-bottom:1px solid #c4c0bc;background:linear-gradient(#dcdad8,#e7e5e3);border-radius:0 7px 7px 0"></div><div style="left:413px;top:257px;width:31px;height:13px;border:1px solid #aaa6a2;border-radius:7px;background:linear-gradient(#ffffff,#f6f5f4 50%,#eae8e6)"></div><div style="left:424px;top:262px;width:1px;height:3px;background:#aaa6a2;"></div><div style="left:425px;top:262px;width:1px;height:3px;background:#ffffff;"></div><div style="left:427px;top:262px;width:1px;height:3px;background:#aaa6a2;"></div><div style="left:428px;top:262px;width:1px;height:3px;background:#ffffff;"></div><div style="left:430px;top:262px;width:1px;height:3px;background:#aaa6a2;"></div><div style="left:431px;top:262px;width:1px;height:3px;background:#ffffff;"></div><svg style="left:263px;top:261px" width="4" height="5" viewBox="0 0 4 5"><polygon points="4,0 4,5 0,2.5" fill="#555"/></svg><svg style="left:864px;top:261px" width="4" height="5" viewBox="0 0 4 5"><polygon points="0,0 0,5 4,2.5" fill="#555"/></svg><div style="left:874px;top:70px;width:13px;height:185px;border:1px solid #b3afab;border-radius:7px;background:#f8f7f6"></div><div style="left:874px;top:83px;width:13px;height:159px;border:1px solid #aaa6a2;border-radius:7px;background:linear-gradient(90deg,#fbfaf9,#f4f3f2 50%,#e5e3e1)"></div><div style="left:879px;top:158px;width:3px;height:1px;background:#aaa6a2;"></div><div style="left:879px;top:159px;width:3px;height:1px;background:#ffffff;"></div><div style="left:879px;top:161px;width:3px;height:1px;background:#aaa6a2;"></div><div style="left:879px;top:162px;width:3px;height:1px;background:#ffffff;"></div><div style="left:879px;top:164px;width:3px;height:1px;background:#aaa6a2;"></div><div style="left:879px;top:165px;width:3px;height:1px;background:#ffffff;"></div><svg style="left:878px;top:76px" width="5" height="3" viewBox="0 0 5 3"><polygon points="0,3 5,3 2.5,0" fill="#a8a8a8"/></svg><svg style="left:878px;top:246px" width="5" height="3" viewBox="0 0 5 3"><polygon points="0,0 5,0 2.5,3" fill="#a8a8a8"/></svg><div style="left:872px;top:367px;width:17px;height:700px;background:#f5f4f3;"></div><div style="left:874px;top:344px;width:13px;height:756px;border:1px solid #b3afab;border-radius:7px;background:#f8f7f6"></div><div style="left:874px;top:357px;width:13px;height:712px;border:1px solid #aaa6a2;border-radius:7px;background:linear-gradient(90deg,#fbfaf9,#f4f3f2 50%,#e5e3e1)"></div><div style="left:879px;top:710px;width:3px;height:1px;background:#aaa6a2;"></div><div style="left:879px;top:711px;width:3px;height:1px;background:#ffffff;"></div><div style="left:879px;top:713px;width:3px;height:1px;background:#aaa6a2;"></div><div style="left:879px;top:714px;width:3px;height:1px;background:#ffffff;"></div><div style="left:879px;top:716px;width:3px;height:1px;background:#aaa6a2;"></div><div style="left:879px;top:717px;width:3px;height:1px;background:#ffffff;"></div><svg style="left:878px;top:350px" width="5" height="3" viewBox="0 0 5 3"><polygon points="0,3 5,3 2.5,0" fill="#a8a8a8"/></svg><svg width="0" height="0" style="left:0;top:0"><defs><linearGradient id="yg" x1="0" y1="0" x2="0" y2="1"><stop offset="0" stop-color="#fffae0"/><stop offset="0.45" stop-color="#ffeeb0"/><stop offset="1" stop-color="#ffcc48"/></linearGradient><linearGradient id="bg1" gradientUnits="userSpaceOnUse" x1="0" y1="0" x2="0" y2="14"><stop offset="0" stop-color="#2f7fc0"/><stop offset="1" stop-color="#00529a"/></linearGradient></defs></svg><svg style="left:6px;top:13px" width="16" height="14" viewBox="0 0 16 14"><rect x="0.5" y="0.5" width="7" height="2" fill="#fff" stroke="url(#bg1)" stroke-width="1"/><rect x="0.5" y="5.5" width="7" height="2" fill="#fff" stroke="url(#bg1)" stroke-width="1"/><rect x="0.5" y="10.5" width="7" height="2" fill="#fff" stroke="url(#bg1)" stroke-width="1"/><path d="M8 1.5 H9.5 V11.5 H8 M8 6.5 H13" fill="none" stroke="#5a7abc" stroke-width="1"/><path d="M12 4 L15.2 6.5 L12 9 L13 6.5 Z" fill="#4a5866"/></svg><svg style="left:118px;top:15px" width="10" height="10" viewBox="0 0 10 10"><path d="M0.5 0.5 H3 L5 2.5 L7 0.5 H9.5 V3 L7.5 5 L9.5 7 V9.5 H7 L5 7.5 L3 9.5 H0.5 V7 L2.5 5 L0.5 3 Z" fill="#fff"/><rect x="0" y="0" width="1" height="1" fill="#000"/><rect x="1" y="0" width="1" height="1" fill="#000"/><rect x="2" y="0" width="1" height="1" fill="#000"/><rect x="7" y="0" width="1" height="1" fill="#000"/><rect x="8" y="0" width="1" height="1" fill="#000"/><rect x="9" y="0" width="1" height="1" fill="#000"/><rect x="0" y="1" width="1" height="1" fill="#000"/><rect x="3" y="1" width="1" height="1" fill="#000"/><rect x="6" y="1" width="1" height="1" fill="#000"/><rect x="9" y="1" width="1" height="1" fill="#000"/><rect x="0" y="2" width="1" height="1" fill="#000"/><rect x="4" y="2" width="1" height="1" fill="#000"/><rect x="5" y="2" width="1" height="1" fill="#000"/><rect x="9" y="2" width="1" height="1" fill="#000"/><rect x="1" y="3" width="1" height="1" fill="#000"/><rect x="8" y="3" width="1" height="1" fill="#000"/><rect x="2" y="4" width="1" height="1" fill="#000"/><rect x="7" y="4" width="1" height="1" fill="#000"/><rect x="2" y="5" width="1" height="1" fill="#000"/><rect x="7" y="5" width="1" height="1" fill="#000"/><rect x="1" y="6" width="1" height="1" fill="#000"/><rect x="8" y="6" width="1" height="1" fill="#000"/><rect x="0" y="7" width="1" height="1" fill="#000"/><rect x="4" y="7" width="1" height="1" fill="#000"/><rect x="5" y="7" width="1" height="1" fill="#000"/><rect x="9" y="7" width="1" height="1" fill="#000"/><rect x="0" y="8" width="1" height="1" fill="#000"/><rect x="3" y="8" width="1" height="1" fill="#000"/><rect x="6" y="8" width="1" height="1" fill="#000"/><rect x="9" y="8" width="1" height="1" fill="#000"/><rect x="0" y="9" width="1" height="1" fill="#000"/><rect x="1" y="9" width="1" height="1" fill="#000"/><rect x="2" y="9" width="1" height="1" fill="#000"/><rect x="7" y="9" width="1" height="1" fill="#000"/><rect x="8" y="9" width="1" height="1" fill="#000"/><rect x="9" y="9" width="1" height="1" fill="#000"/></svg><svg style="left:143px;top:15px" width="12" height="12" viewBox="0 0 12 12"><rect x="0" y="0" width="3" height="3" fill="#4a6aac"/><rect x="1" y="1" width="1" height="1" fill="#8aa4d8"/><rect x="4" y="1" width="7" height="1" fill="#4a6aac"/><rect x="1" y="3" width="1" height="7" fill="#4a6aac"/><rect x="2" y="5" width="2" height="1" fill="#4a6aac"/><rect x="4" y="4" width="3" height="3" fill="#4a6aac"/><rect x="5" y="5" width="1" height="1" fill="#8aa4d8"/><rect x="8" y="5" width="3" height="1" fill="#4a6aac"/><rect x="2" y="9" width="2" height="1" fill="#4a6aac"/><rect x="4" y="8" width="3" height="3" fill="#4a6aac"/><rect x="5" y="9" width="1" height="1" fill="#8aa4d8"/><rect x="8" y="9" width="3" height="1" fill="#4a6aac"/></svg><svg style="left:240px;top:14px" width="13" height="11" viewBox="0 0 13 11"><rect x="0" y="0" width="13" height="11" fill="#4b608c"/><rect x="1" y="1" width="11" height="1" fill="#8c9cc0"/><rect x="1" y="2" width="11" height="1" fill="#5c709c"/><rect x="1" y="3" width="11" height="7" fill="#c3cbdc"/><rect x="1" y="3" width="3" height="1" fill="#fff"/><rect x="5" y="3" width="7" height="1" fill="#fff"/><rect x="1" y="5" width="3" height="1" fill="#fff"/><rect x="5" y="5" width="7" height="1" fill="#fff"/><rect x="1" y="7" width="3" height="1" fill="#fff"/><rect x="5" y="7" width="7" height="1" fill="#fff"/><rect x="1" y="9" width="3" height="1" fill="#fff"/><rect x="5" y="9" width="7" height="1" fill="#fff"/></svg><div style="left:836px;top:15px;width:10px;height:4px;border:1px solid #000;background:#fff"></div><div style="left:864px;top:15px;width:10px;height:10px;border:1px solid #000;background:#fff"></div><div style="left:864px;top:17px;width:10px;height:1px;background:#000;"></div><svg style="left:369px;top:45px" width="16" height="16" viewBox="0 0 16 16"><path d="M0 2.5 H6.5" stroke="#4a6f9a" stroke-width="1"/><path d="M4 0.20000000000000018 L6.8 2.5 L4 4.8" fill="none" stroke="#46505e" stroke-width="1.2"/><path d="M8.5 0.0 V5.0" stroke="#3a4658" stroke-width="1.1"/><path d="M0 12.5 H6.5" stroke="#4a6f9a" stroke-width="1"/><path d="M4 10.2 L6.8 12.5 L4 14.8" fill="none" stroke="#46505e" stroke-width="1.2"/><path d="M8.5 10.0 V15.0" stroke="#3a4658" stroke-width="1.1"/><path d="M3.5 7.5 L5 6.2 H10.5 V4.2 L15 7.5 L10.5 10.8 V8.8 H5 Z" fill="url(#yg)" stroke="#c58a14" stroke-width="1" stroke-linejoin="round"/></svg><svg style="left:399px;top:47px" width="13" height="12" viewBox="0 0 13 12"><path d="M0.2 3.2 L1.7 0 L3.2 3.2 Z" fill="#2c6cc0"/><rect x="0.2" y="4.2" width="3" height="3" fill="#e2574c"/><rect x="1.2" y="5.2" width="1" height="1" fill="#f8c0b8"/><path d="M1.7 8 L3.4 9.7 L1.7 11.4 L0 9.7 Z" fill="#2c9a50"/><rect x="1.2" y="9.2" width="1" height="1" fill="#a8e0b4"/><rect x="5" y="1" width="7" height="1" fill="#35559c"/><rect x="5" y="2" width="7" height="1" fill="#c4d2ee"/><rect x="5" y="5" width="7" height="1" fill="#35559c"/><rect x="5" y="6" width="7" height="1" fill="#c4d2ee"/><rect x="5" y="9" width="7" height="1" fill="#35559c"/><rect x="5" y="10" width="7" height="1" fill="#c4d2ee"/></svg><div style="left:423px;top:44px;width:1px;height:16px;background:rgba(0,0,0,0.13);"></div><div style="left:424px;top:44px;width:1px;height:16px;background:rgba(255,255,255,0.5);"></div><svg style="left:438px;top:44px" width="14" height="17" viewBox="0 0 14 17"><rect x="2" y="1" width="2" height="4.5" fill="#b8402c"/><rect x="3" y="1" width="1" height="1.5" fill="#88a848"/><path d="M1.5 8.3 L6.4 3.2 L11.5 8.3 V15.5 H1.5 Z" fill="#eef6ff"/><path d="M1.5 8.5 V15.5 M11.5 8.5 V15.5" stroke="#2c4c9c" stroke-width="1"/><path d="M1 15.5 H12" stroke="#5878b8" stroke-width="1"/><path d="M0.6 8.9 L6.4 2.6 L12.4 8.9" fill="none" stroke="#5f5838" stroke-width="1.1"/><path d="M0.6 7.9 L6.4 1.5 L12.4 7.9" fill="none" stroke="#f8d490" stroke-width="1.3"/><rect x="5" y="7.2" width="3" height="2.7" fill="#2c8a5c"/><rect x="6" y="8" width="1" height="1" fill="#e0e020"/><rect x="5" y="11.2" width="3" height="4.6" fill="#1c4c7c"/><rect x="6" y="12" width="1" height="3" fill="#c8e020"/></svg><svg style="left:464px;top:46px" width="17" height="16" viewBox="0 0 17 16"><rect x="5" y="2" width="11" height="7" fill="#f4f4f4"/><rect x="0" y="1" width="16" height="1" fill="#4c4c4c"/><rect x="0" y="2" width="5" height="7" fill="#0000ff"/><rect x="5" y="5" width="11" height="1" fill="#c4c4c4"/><rect x="0" y="9" width="6" height="1" fill="#707070"/><path d="M5.5 10.6 L10.5 6.4 V8.6 H15.5 V12.5 H10.5 V14.8 Z" fill="url(#yg)" stroke="#c58a14" stroke-width="1" stroke-linejoin="round"/></svg><svg style="left:492px;top:46px" width="17" height="16" viewBox="0 0 17 16"><rect x="0" y="2" width="11" height="7" fill="#f4f4f4"/><rect x="0" y="1" width="16" height="1" fill="#4c4c4c"/><rect x="11" y="2" width="5" height="7" fill="#0000ff"/><rect x="0" y="5" width="11" height="1" fill="#c4c4c4"/><rect x="0" y="9" width="6" height="1" fill="#707070"/><path d="M16 10.6 L11 6.4 V8.6 H6 V12.5 H11 V14.8 Z" fill="url(#yg)" stroke="#c58a14" stroke-width="1" stroke-linejoin="round"/></svg><div style="left:520px;top:44px;width:1px;height:16px;background:rgba(0,0,0,0.13);"></div><div style="left:521px;top:44px;width:1px;height:16px;background:rgba(255,255,255,0.5);"></div><svg style="left:533px;top:45px" width="16" height="17" viewBox="0 0 16 17"><rect x="2" y="1" width="1.5" height="12" fill="#b48c24"/><rect x="2" y="9" width="1.5" height="4" fill="#d4b460" opacity="0.6"/><path d="M3 1.7 L7 2 L11 3.5 L7 5.6 L3 6.6 Z" fill="#fff47c" stroke="#b48c1c" stroke-width="1" stroke-linejoin="round"/><path d="M9 7 H12 V10 H15 V13 H12 V16 H9 V13 H6 V10 H9 Z" fill="#1f8c4c"/><rect x="10" y="8" width="1" height="7" fill="#c4de50"/><rect x="7" y="11" width="7" height="1" fill="#c4de50"/><rect x="10" y="11" width="1" height="1" fill="#b0d850"/></svg><svg style="left:561px;top:45.3px" width="16" height="16" viewBox="0 0 16 16"><path d="M1.5 1 V12" stroke="#cbcbcb" stroke-width="1.2"/><path d="M2 1.3 L9.8 3.2 L2 6.6 Z" fill="#eeeeee" stroke="#cbcbcb" stroke-width="0.9" stroke-linejoin="round"/><path d="M3.5 10.8 L8.5 6.6 V8.9 H14.5 V12.7 H8.5 V15 Z" fill="#eeeeee" stroke="#cbcbcb" stroke-width="1" stroke-linejoin="round"/></svg><svg style="left:589px;top:45.3px" width="16" height="16" viewBox="0 0 16 16"><path d="M1.5 1 V12" stroke="#cbcbcb" stroke-width="1.2"/><path d="M2 1.3 L9.8 3.2 L2 6.6 Z" fill="#eeeeee" stroke="#cbcbcb" stroke-width="0.9" stroke-linejoin="round"/><path d="M15.3 10.8 L10.3 6.6 V8.9 H4.5 V12.7 H10.3 V15 Z" fill="#eeeeee" stroke="#cbcbcb" stroke-width="1" stroke-linejoin="round"/></svg><svg style="left:616px;top:51px" width="7" height="5" viewBox="0 0 7 5"><path d="M0 0 H7 L3.5 4.6 Z" fill="#9c9c9c"/></svg><div style="left:636px;top:44px;width:1px;height:16px;background:rgba(0,0,0,0.13);"></div><div style="left:637px;top:44px;width:1px;height:16px;background:rgba(255,255,255,0.5);"></div><svg style="left:649.5px;top:45.3px" width="13" height="14.5" viewBox="0 0 13 14.5"><path d="M6.5 0.7 L12.3 7 H9.3 V13.6 H3.7 V7 H0.7 Z" fill="url(#yg)" stroke="#c58a14" stroke-width="1" stroke-linejoin="round"/></svg><svg style="left:677.5px;top:45.3px" width="13" height="14.5" viewBox="0 0 13 14.5"><path d="M6.5 13.8 L12.3 7.5 H9.3 V0.9 H3.7 V7.5 H0.7 Z" fill="url(#yg)" stroke="#c58a14" stroke-width="1" stroke-linejoin="round"/></svg><svg style="left:704.7px;top:45px" width="15" height="16" viewBox="0 0 15 16"><path d="M9.3 10.3 L13.8 14.8" stroke="#7a4a3c" stroke-width="2" stroke-linecap="round"/><circle cx="5.6" cy="6" r="4.6" fill="#f4f8fc" stroke="#aaa68e" stroke-width="1.2"/><rect x="2.8" y="5.1" width="5.6" height="1.9" fill="#1b5cae"/><rect x="4.65" y="3.2" width="1.9" height="5.6" fill="#1b5cae"/></svg><svg style="left:732.7px;top:45px" width="15" height="16" viewBox="0 0 15 16"><path d="M9.3 10.3 L13.8 14.8" stroke="#7a4a3c" stroke-width="2" stroke-linecap="round"/><circle cx="5.6" cy="6" r="4.6" fill="#f4f8fc" stroke="#aaa68e" stroke-width="1.2"/><rect x="2.8" y="5.1" width="5.6" height="1.9" fill="#1b5cae"/></svg><div style="left:759px;top:44px;width:1px;height:16px;background:rgba(0,0,0,0.13);"></div><div style="left:760px;top:44px;width:1px;height:16px;background:rgba(255,255,255,0.5);"></div><div style="left:767px;top:40px;width:26px;height:26px;border:1px solid #a6a29e;border-radius:4px;background:linear-gradient(#dddbd9,#eeedec 60%,#f2f1f0)"></div><svg style="left:774px;top:45.5px" width="15" height="17" viewBox="0 0 15 17"><path d="M3.5 3 V14" stroke="#555" stroke-width="1.1"/><path d="M1 11 L3.5 14.8 L6 11 Z" fill="#555"/><path d="M10.8 3 V15" stroke="#555" stroke-width="1.1"/><path d="M8.3 5.6 L10.8 1.8 L13.3 5.6 Z" fill="#555"/><path d="M-0.5 0.5 L14.5 16" stroke="#1c3a9c" stroke-width="1.3"/></svg><svg style="left:800.5px;top:46px" width="16" height="15" viewBox="0 0 16 15"><path d="M2.8 14.5 V8" stroke="#c4c4c4" stroke-width="1"/><path d="M0.8 10.3 L2.8 7.3 L4.8 10.3" fill="none" stroke="#c4c4c4" stroke-width="1"/><path d="M5.2 7.4 L9.8 3.4 V5.5 H15 V9.3 H9.8 V11.4 Z" fill="#ebebeb" stroke="#c4c4c4" stroke-width="1" stroke-linejoin="round"/></svg><svg style="left:829px;top:46px" width="16" height="15" viewBox="0 0 16 15"><path d="M12.8 7.5 V1" stroke="#c4c4c4" stroke-width="1"/><path d="M10.8 3.3 L12.8 0.3 L14.8 3.3" fill="none" stroke="#c4c4c4" stroke-width="1"/><path d="M10.6 7.4 L6 3.4 V5.5 H0.8 V9.3 H6 V11.4 Z" fill="#ebebeb" stroke="#c4c4c4" stroke-width="1" stroke-linejoin="round"/></svg><svg style="left:866.5px;top:47.5px" width="11" height="7" viewBox="0 0 11 7"><path d="M0.9 0.9 H10.1 L5.5 5.4 Z" fill="#fff" stroke="#000" stroke-width="0.9" stroke-linejoin="miter"/><rect x="0.5" y="0.2" width="10" height="1.2" fill="#000"/></svg><svg style="left:6px;top:287px" width="15" height="15" viewBox="0 0 15 15"><rect x="0" y="9" width="1" height="6" fill="#0a5a9e"/><rect x="2" y="4" width="1" height="11" fill="#0a5a9e"/><rect x="4" y="1" width="1" height="14" fill="#0a5a9e"/><rect x="6" y="0" width="1" height="15" fill="#0a5a9e"/><rect x="8" y="4" width="1" height="11" fill="#0a5a9e"/><rect x="10" y="9" width="1" height="6" fill="#0a5a9e"/><rect x="12" y="3" width="1" height="12" fill="#0a5a9e"/><rect x="14" y="7" width="1" height="8" fill="#0a5a9e"/></svg><svg style="left:106px;top:288px" width="13" height="11" viewBox="0 0 13 11"><rect x="0" y="0" width="13" height="11" fill="#4b608c"/><rect x="1" y="1" width="11" height="1" fill="#8c9cc0"/><rect x="1" y="2" width="11" height="1" fill="#5c709c"/><rect x="1" y="3" width="11" height="7" fill="#c3cbdc"/><rect x="1" y="3" width="3" height="1" fill="#fff"/><rect x="5" y="3" width="7" height="1" fill="#fff"/><rect x="1" y="5" width="3" height="1" fill="#fff"/><rect x="5" y="5" width="7" height="1" fill="#fff"/><rect x="1" y="7" width="3" height="1" fill="#fff"/><rect x="5" y="7" width="7" height="1" fill="#fff"/><rect x="1" y="9" width="3" height="1" fill="#fff"/><rect x="5" y="9" width="7" height="1" fill="#fff"/></svg><svg style="left:206px;top:285.8px" width="17" height="16.5" viewBox="0 0 17 16.5"><path d="M0.5 0.6 L7.6 1.6 V14.4 L0.5 12.6 Z" fill="#eef7f8" stroke="#7f8a8a" stroke-width="1"/><path d="M0.5 0.6 L7.6 1.6" stroke="#c9a864" stroke-width="1"/><path d="M0.5 12.6 L7.6 14.4" stroke="#2c4c6e" stroke-width="1.2"/><path d="M2.3 4 L5.8 4.7 M2.3 6 L5.8 6.7 M2.3 8 L5.8 8.7" stroke="#9ab0c8" stroke-width="0.9"/><path d="M13 0.8 H15.6 V12.8 H13 Z" fill="#eef7f8" stroke="#2c4c6e" stroke-width="1"/><path d="M13 0.8 H15.6" stroke="#c9a864" stroke-width="1"/><path d="M8.2 0.6 H13 V15.6 L10.6 12.6 L8.2 15.6 Z" fill="#62b0ff" stroke="#0c54a4" stroke-width="1" stroke-linejoin="round"/></svg><svg style="left:312px;top:286px" width="16" height="15" viewBox="0 0 16 15"><path d="M2.4 2.5 V5.6 H6.5 M9.5 2.5 V5.6 H6.5 V9.4 H13.5 V5.6" fill="none" stroke="#111" stroke-width="1"/><path d="M2.4 2.5 H13.5 V5.6" fill="none" stroke="#0018ff" stroke-width="1.1"/><circle cx="2.4" cy="2.5" r="1.55" fill="#ff0000"/><circle cx="9.5" cy="2.5" r="1.55" fill="#ff0000"/><circle cx="13.5" cy="5.6" r="1.55" fill="#ff0000"/><circle cx="6.5" cy="5.6" r="1.55" fill="#2ee600"/><circle cx="9.5" cy="9.4" r="1.55" fill="#2ee600"/><path d="M1 12.5 H13" stroke="#000" stroke-width="1"/><path d="M11 10.6 L15 12.5 L11 14.4 Z" fill="#000"/></svg><svg style="left:458px;top:289px" width="10" height="10" viewBox="0 0 10 10"><path d="M0.5 0.5 H3 L5 2.5 L7 0.5 H9.5 V3 L7.5 5 L9.5 7 V9.5 H7 L5 7.5 L3 9.5 H0.5 V7 L2.5 5 L0.5 3 Z" fill="#fff"/><rect x="0" y="0" width="1" height="1" fill="#000"/><rect x="1" y="0" width="1" height="1" fill="#000"/><rect x="2" y="0" width="1" height="1" fill="#000"/><rect x="7" y="0" width="1" height="1" fill="#000"/><rect x="8" y="0" width="1" height="1" fill="#000"/><rect x="9" y="0" width="1" height="1" fill="#000"/><rect x="0" y="1" width="1" height="1" fill="#000"/><rect x="3" y="1" width="1" height="1" fill="#000"/><rect x="6" y="1" width="1" height="1" fill="#000"/><rect x="9" y="1" width="1" height="1" fill="#000"/><rect x="0" y="2" width="1" height="1" fill="#000"/><rect x="4" y="2" width="1" height="1" fill="#000"/><rect x="5" y="2" width="1" height="1" fill="#000"/><rect x="9" y="2" width="1" height="1" fill="#000"/><rect x="1" y="3" width="1" height="1" fill="#000"/><rect x="8" y="3" width="1" height="1" fill="#000"/><rect x="2" y="4" width="1" height="1" fill="#000"/><rect x="7" y="4" width="1" height="1" fill="#000"/><rect x="2" y="5" width="1" height="1" fill="#000"/><rect x="7" y="5" width="1" height="1" fill="#000"/><rect x="1" y="6" width="1" height="1" fill="#000"/><rect x="8" y="6" width="1" height="1" fill="#000"/><rect x="0" y="7" width="1" height="1" fill="#000"/><rect x="4" y="7" width="1" height="1" fill="#000"/><rect x="5" y="7" width="1" height="1" fill="#000"/><rect x="9" y="7" width="1" height="1" fill="#000"/><rect x="0" y="8" width="1" height="1" fill="#000"/><rect x="3" y="8" width="1" height="1" fill="#000"/><rect x="6" y="8" width="1" height="1" fill="#000"/><rect x="9" y="8" width="1" height="1" fill="#000"/><rect x="0" y="9" width="1" height="1" fill="#000"/><rect x="1" y="9" width="1" height="1" fill="#000"/><rect x="2" y="9" width="1" height="1" fill="#000"/><rect x="7" y="9" width="1" height="1" fill="#000"/><rect x="8" y="9" width="1" height="1" fill="#000"/><rect x="9" y="9" width="1" height="1" fill="#000"/></svg><div style="left:836px;top:289px;width:10px;height:4px;border:1px solid #000;background:#fff"></div><div style="left:864px;top:289px;width:10px;height:10px;border:1px solid #000;background:#fff"></div><div style="left:864px;top:291px;width:10px;height:1px;background:#000;"></div><svg style="left:495px;top:321px" width="13" height="12" viewBox="0 0 13 12"><path d="M0.2 3.2 L1.7 0 L3.2 3.2 Z" fill="#2c6cc0"/><rect x="0.2" y="4.2" width="3" height="3" fill="#e2574c"/><rect x="1.2" y="5.2" width="1" height="1" fill="#f8c0b8"/><path d="M1.7 8 L3.4 9.7 L1.7 11.4 L0 9.7 Z" fill="#2c9a50"/><rect x="1.2" y="9.2" width="1" height="1" fill="#a8e0b4"/><rect x="5" y="1" width="7" height="1" fill="#35559c"/><rect x="5" y="2" width="7" height="1" fill="#c4d2ee"/><rect x="5" y="5" width="7" height="1" fill="#35559c"/><rect x="5" y="6" width="7" height="1" fill="#c4d2ee"/><rect x="5" y="9" width="7" height="1" fill="#35559c"/><rect x="5" y="10" width="7" height="1" fill="#c4d2ee"/></svg><div style="left:519px;top:318px;width:1px;height:16px;background:rgba(0,0,0,0.13);"></div><div style="left:520px;top:318px;width:1px;height:16px;background:rgba(255,255,255,0.5);"></div><svg style="left:534px;top:318px" width="14" height="17" viewBox="0 0 14 17"><rect x="2" y="1" width="2" height="4.5" fill="#b8402c"/><rect x="3" y="1" width="1" height="1.5" fill="#88a848"/><path d="M1.5 8.3 L6.4 3.2 L11.5 8.3 V15.5 H1.5 Z" fill="#eef6ff"/><path d="M1.5 8.5 V15.5 M11.5 8.5 V15.5" stroke="#2c4c9c" stroke-width="1"/><path d="M1 15.5 H12" stroke="#5878b8" stroke-width="1"/><path d="M0.6 8.9 L6.4 2.6 L12.4 8.9" fill="none" stroke="#5f5838" stroke-width="1.1"/><path d="M0.6 7.9 L6.4 1.5 L12.4 7.9" fill="none" stroke="#f8d490" stroke-width="1.3"/><rect x="5" y="7.2" width="3" height="2.7" fill="#2c8a5c"/><rect x="6" y="8" width="1" height="1" fill="#e0e020"/><rect x="5" y="11.2" width="3" height="4.6" fill="#1c4c7c"/><rect x="6" y="12" width="1" height="3" fill="#c8e020"/></svg><svg style="left:560px;top:320px" width="17" height="16" viewBox="0 0 17 16"><rect x="5" y="2" width="11" height="7" fill="#f4f4f4"/><rect x="0" y="1" width="16" height="1" fill="#4c4c4c"/><rect x="0" y="2" width="5" height="7" fill="#0000ff"/><rect x="5" y="5" width="11" height="1" fill="#c4c4c4"/><rect x="0" y="9" width="6" height="1" fill="#707070"/><path d="M5.5 10.6 L10.5 6.4 V8.6 H15.5 V12.5 H10.5 V14.8 Z" fill="url(#yg)" stroke="#c58a14" stroke-width="1" stroke-linejoin="round"/></svg><svg style="left:588px;top:320px" width="17" height="16" viewBox="0 0 17 16"><rect x="0" y="2" width="11" height="7" fill="#f4f4f4"/><rect x="0" y="1" width="16" height="1" fill="#4c4c4c"/><rect x="11" y="2" width="5" height="7" fill="#0000ff"/><rect x="0" y="5" width="11" height="1" fill="#c4c4c4"/><rect x="0" y="9" width="6" height="1" fill="#707070"/><path d="M16 10.6 L11 6.4 V8.6 H6 V12.5 H11 V14.8 Z" fill="url(#yg)" stroke="#c58a14" stroke-width="1" stroke-linejoin="round"/></svg><div style="left:616px;top:318px;width:1px;height:16px;background:rgba(0,0,0,0.13);"></div><div style="left:617px;top:318px;width:1px;height:16px;background:rgba(255,255,255,0.5);"></div><svg style="left:629px;top:319px" width="16" height="17" viewBox="0 0 16 17"><rect x="2" y="1" width="1.5" height="12" fill="#b48c24"/><rect x="2" y="9" width="1.5" height="4" fill="#d4b460" opacity="0.6"/><path d="M3 1.7 L7 2 L11 3.5 L7 5.6 L3 6.6 Z" fill="#fff47c" stroke="#b48c1c" stroke-width="1" stroke-linejoin="round"/><path d="M9 7 H12 V10 H15 V13 H12 V16 H9 V13 H6 V10 H9 Z" fill="#1f8c4c"/><rect x="10" y="8" width="1" height="7" fill="#c4de50"/><rect x="7" y="11" width="7" height="1" fill="#c4de50"/><rect x="10" y="11" width="1" height="1" fill="#b0d850"/></svg><svg style="left:657px;top:319.3px" width="16" height="16" viewBox="0 0 16 16"><path d="M1.5 1 V12" stroke="#cbcbcb" stroke-width="1.2"/><path d="M2 1.3 L9.8 3.2 L2 6.6 Z" fill="#eeeeee" stroke="#cbcbcb" stroke-width="0.9" stroke-linejoin="round"/><path d="M3.5 10.8 L8.5 6.6 V8.9 H14.5 V12.7 H8.5 V15 Z" fill="#eeeeee" stroke="#cbcbcb" stroke-width="1" stroke-linejoin="round"/></svg><svg style="left:685px;top:319.3px" width="16" height="16" viewBox="0 0 16 16"><path d="M1.5 1 V12" stroke="#cbcbcb" stroke-width="1.2"/><path d="M2 1.3 L9.8 3.2 L2 6.6 Z" fill="#eeeeee" stroke="#cbcbcb" stroke-width="0.9" stroke-linejoin="round"/><path d="M15.3 10.8 L10.3 6.6 V8.9 H4.5 V12.7 H10.3 V15 Z" fill="#eeeeee" stroke="#cbcbcb" stroke-width="1" stroke-linejoin="round"/></svg><svg style="left:712px;top:325px" width="7" height="5" viewBox="0 0 7 5"><path d="M0 0 H7 L3.5 4.6 Z" fill="#9c9c9c"/></svg><div style="left:732px;top:318px;width:1px;height:16px;background:rgba(0,0,0,0.13);"></div><div style="left:733px;top:318px;width:1px;height:16px;background:rgba(255,255,255,0.5);"></div><svg style="left:745.5px;top:319.3px" width="13" height="14.5" viewBox="0 0 13 14.5"><path d="M6.5 0.7 L12.3 7 H9.3 V13.6 H3.7 V7 H0.7 Z" fill="url(#yg)" stroke="#c58a14" stroke-width="1" stroke-linejoin="round"/></svg><svg style="left:773.5px;top:319.3px" width="13" height="14.5" viewBox="0 0 13 14.5"><path d="M6.5 13.8 L12.3 7.5 H9.3 V0.9 H3.7 V7.5 H0.7 Z" fill="url(#yg)" stroke="#c58a14" stroke-width="1" stroke-linejoin="round"/></svg><svg style="left:800.7px;top:319px" width="15" height="16" viewBox="0 0 15 16"><path d="M9.3 10.3 L13.8 14.8" stroke="#7a4a3c" stroke-width="2" stroke-linecap="round"/><circle cx="5.6" cy="6" r="4.6" fill="#f4f8fc" stroke="#aaa68e" stroke-width="1.2"/><rect x="2.8" y="5.1" width="5.6" height="1.9" fill="#1b5cae"/><rect x="4.65" y="3.2" width="1.9" height="5.6" fill="#1b5cae"/></svg><svg style="left:828.7px;top:319px" width="15" height="16" viewBox="0 0 15 16"><path d="M9.3 10.3 L13.8 14.8" stroke="#7a4a3c" stroke-width="2" stroke-linecap="round"/><circle cx="5.6" cy="6" r="4.6" fill="#f4f8fc" stroke="#aaa68e" stroke-width="1.2"/><rect x="2.8" y="5.1" width="5.6" height="1.9" fill="#1b5cae"/></svg><svg style="left:866.5px;top:321.5px" width="11" height="7" viewBox="0 0 11 7"><path d="M0.9 0.9 H10.1 L5.5 5.4 Z" fill="#fff" stroke="#000" stroke-width="0.9" stroke-linejoin="miter"/><rect x="0.5" y="0.2" width="10" height="1.2" fill="#000"/></svg></div>
</body></html>
